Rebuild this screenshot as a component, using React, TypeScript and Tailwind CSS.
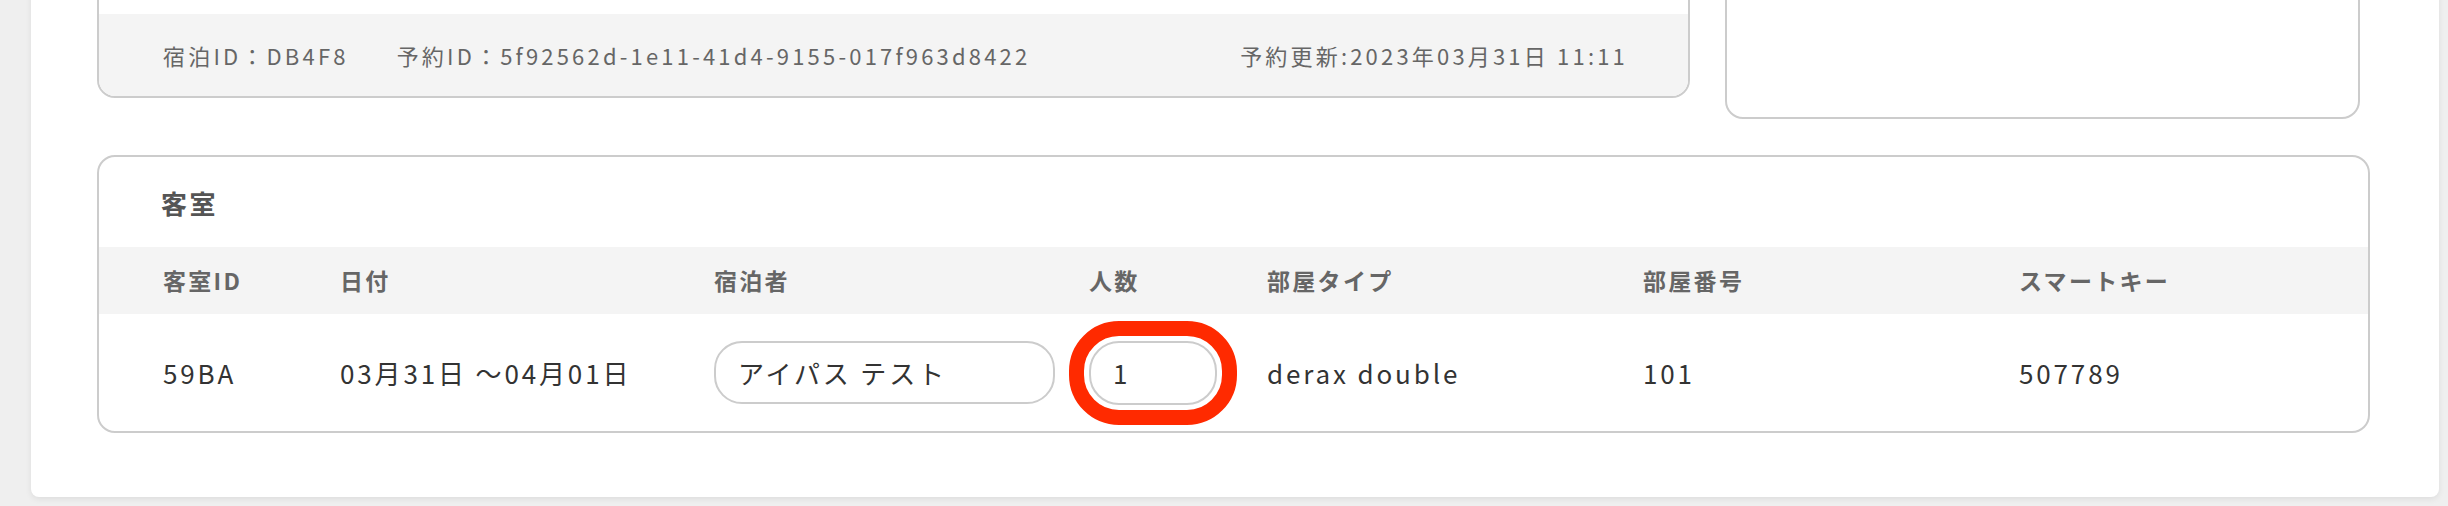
import React from 'react';

const FONT = "font-['Noto_Sans_CJK_JP','Noto_Sans',sans-serif]";

const COLUMNS = ['客室ID', '日付', '宿泊者', '人数', '部屋タイプ', '部屋番号', 'スマートキー'];

const GRID = 'grid grid-cols-[177px_374px_375px_178px_376px_376px_1fr] pl-[64px]';

export default function App() {
    return (
        <div className={`h-[506px] overflow-hidden bg-[#efefef] ${FONT}`}>
            <div className="ml-[31px] mr-[9px] -mt-[100px] rounded-b-[8px] bg-white pt-[20px] pl-[66px] pr-[69px] pb-[64px] shadow-[0_2px_6px_rgba(0,0,0,0.08)]">
                {/* top row: reservation summary + side box */}
                <div className="flex items-start gap-[35px] pr-[10px]">
                    <div className="flex-1 overflow-hidden rounded-[18px] border-2 border-[#cccccc] bg-white">
                        <div className="h-[92px]" />
                        <div className="flex h-[82px] items-center justify-between bg-[#f4f4f4] pl-[64px] pr-[60px] text-[22px] tracking-[0.145em] text-[#666666]">
                            <div className="flex gap-[48px]">
                                <span>宿泊ID：DB4F8</span>
                                <span>予約ID：5f92562d-1e11-41d4-9155-017f963d8422</span>
                            </div>
                            <span>予約更新:2023年03月31日 11:11</span>
                        </div>
                    </div>
                    <div className="h-[199px] w-[635px] rounded-[18px] border-2 border-[#cccccc] bg-white" />
                </div>

                {/* rooms */}
                <div className="mt-[36px] overflow-hidden rounded-[18px] border-2 border-[#cccccc] bg-white">
                    <div className="flex h-[90px] items-center pl-[62px] text-[26px] font-bold tracking-[0.1em] text-[#555555]">
                        客室
                    </div>
                    <div className={`${GRID} h-[67px] items-center bg-[#f4f4f4] text-[23px] font-bold tracking-[0.1em] text-[#666666]`}>
                        {COLUMNS.map(c => (
                            <div key={c}>{c}</div>
                        ))}
                    </div>
                    <div className={`${GRID} h-[117px] items-center text-[26px] tracking-[0.11em] text-[#333333]`}>
                        <div>59BA</div>
                        <div>03月31日 〜04月01日</div>
                        <div>
                            <input
                                readOnly
                                value="アイパス テスト"
                                className="h-[63px] w-[341px] rounded-[28px] border-2 border-[#cccccc] bg-white px-[22px] tracking-[0.11em] text-[#333333] outline-none"
                            />
                        </div>
                        <div>
                            <input
                                readOnly
                                value="1"
                                className="h-[64px] w-[128px] rounded-[30px] border-2 border-[#cccccc] bg-white px-[22px] text-[#333333] outline-[15px] outline-offset-[5px] outline-solid outline-[#ff2a00]"
                            />
                        </div>
                        <div>derax double</div>
                        <div>101</div>
                        <div>507789</div>
                    </div>
                </div>
            </div>
        </div>
    );
}
